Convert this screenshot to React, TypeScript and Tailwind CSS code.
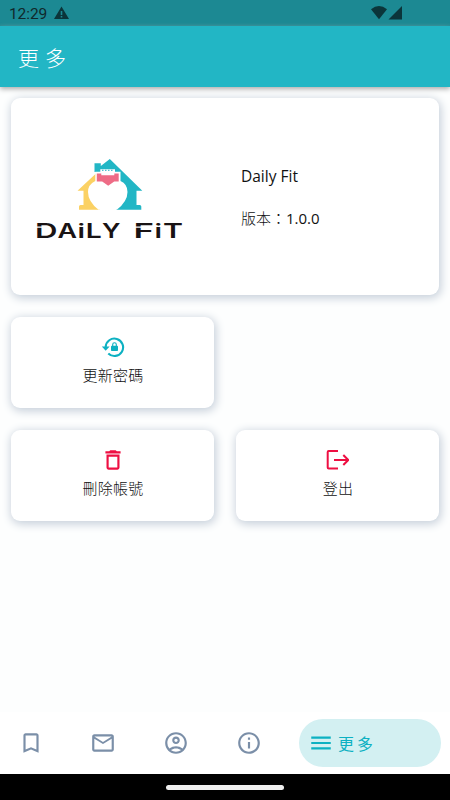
import type { ReactNode } from 'react'
import {
    MdBookmarkBorder,
    MdDeleteOutline,
    MdInfoOutline,
    MdMailOutline,
    MdMenu,
    MdOutlineAccountCircle,
} from 'react-icons/md'

interface ActionCardProps {
    icon: ReactNode
    label: string
}

function StatusBar() {
    return (
        <div className="flex h-[26px] items-center bg-[#1c8993] pl-[9px] pr-[47px] text-[#0b353a]">
            <span className="w-[39px] whitespace-nowrap pt-[2px] font-[Roboto,sans-serif] text-[15.5px] leading-[18px] tracking-[-0.1px] text-[#10282b]">12:29</span>
            <svg className="ml-[6px] h-[14px] w-[15px]" viewBox="0 0 15 14">
                <path fill="currentColor" fillRule="evenodd" d="M7.5 .5 15 13H0ZM6.700 5v4h1.600V5Zm0 5v1.600h1.600V10Z" />
            </svg>
            <svg className="ml-auto h-[14px] w-[32px]" viewBox="0 0 32 14">
                <path fill="currentColor" d="M0 3.200Q8 -3 16 3.200L8 13.300Z" />
                <path fill="currentColor" d="M31 0v13.600H17.500Z" />
            </svg>
        </div>
    )
}

function Logo() {
    return (
        <svg className="h-[96px] w-[156px] overflow-visible" viewBox="32 157 156 96" role="img" aria-label="Daily Fit">
            {/* house */}
            <path fill="#fbd163" d="M96 173.500 77.500 190.700H83.500V205H80.500Q79 205 79 206.500V209.700H100V173.500Z" />
            <path fill="#22b6c5" d="M94.500 163.300h6.300v2.800L109.800 159l32.500 31.700h-5.800V205h3.200Q141.300 205 141.300 206.500v3.200H116V172H94.500Z" />
            {/* kettlebell body */}
            <path fill="#fff" d="M95.300 171.800h5v-2.500h14.700v2.500h5.500V181Q127.500 184 127.500 192 127.500 201.500 116.800 209.800H98.500Q88 201.500 88 192 88 184.500 95.300 181Z" />
            <path fill="#ee6c86" d="M96.800 173.600h4.500v1.700h13v-1.700h4.400v7.800h-4.500l-6 4.300-6-4.300h-5.400Z" />
            <path stroke="#22b6c5" strokeWidth="1" strokeDasharray="1.500 1.500" d="M102 170.300h12" />
            {/* wordmark */}
            <g fill="#191314" className="font-[Inter,sans-serif] text-[19.5px] font-semibold">
                <text y="237.600">
                    <tspan x="35" textLength="22.500" lengthAdjust="spacingAndGlyphs">D</tspan>
                    <tspan x="57.500" textLength="19.500" lengthAdjust="spacingAndGlyphs">A</tspan>
                    <tspan x="77.500" textLength="7.500" lengthAdjust="spacingAndGlyphs">i</tspan>
                    <tspan x="85.700" textLength="16" lengthAdjust="spacingAndGlyphs">L</tspan>
                    <tspan x="102" textLength="18.500" lengthAdjust="spacingAndGlyphs">Y</tspan>
                </text>
                <text y="237.600">
                    <tspan x="133.500" textLength="20.500" lengthAdjust="spacingAndGlyphs">F</tspan>
                    <tspan x="154.500" textLength="7.500" lengthAdjust="spacingAndGlyphs">i</tspan>
                    <tspan x="163" textLength="20" lengthAdjust="spacingAndGlyphs">T</tspan>
                </text>
            </g>
            <path stroke="#fff" strokeWidth="1.300" d="M36 227.200h6M134 227.200h7" />
        </svg>
    )
}

function ResetPasswordIcon() {
    return (
        <svg className="h-[24px] w-[24px]" viewBox="0 0 24 24" fill="none">
            <path d="M4.700 12A8.700 8.700 0 1 1 7.300 18.500" stroke="#0db1c2" strokeWidth="2.100" />
            <path d="M.8 11.500h7.800L4.700 15.800Z" fill="#0db1c2" />
            <rect x="10" y="10.800" width="7" height="5.200" rx=".8" fill="#0db1c2" />
            <path d="M11.700 11V9.500a1.800 1.800 0 0 1 3.600 0V11" stroke="#0db1c2" strokeWidth="1.100" />
        </svg>
    )
}

function LogoutIcon() {
    return (
        <svg className="-ml-[2px] h-[24px] w-[24px]" viewBox="0 0 24 24" fill="none" stroke="#ee0f42" strokeWidth="2">
            <path d="M13 3H3.700a1 1 0 0 0-1 1v15.600a1 1 0 0 0 1 1H13" />
            <path d="M9 12h14.500M18.300 7l5 5-5 5" />
        </svg>
    )
}

function ActionCard({ icon, label }: ActionCardProps) {
    return (
        <button className="flex h-[91px] flex-col items-center rounded-[9px] bg-white pt-[17px] shadow-[1px_2px_10px_1px_#c5ced9]">
            <span className="flex h-[26px] items-center">{icon}</span>
            <span className="mt-[4px] pl-px text-[15px] font-light leading-[22px] tracking-[0.3px] text-[#111]">{label}</span>
        </button>
    )
}

function BottomNav() {
    return (
        <nav className="flex h-[62px] items-center bg-white pl-[17.500px] pr-[9px] pb-px text-[#7b8fa8]">
            <div className="flex flex-1 gap-[46.700px]">
                <MdBookmarkBorder size={26} />
                <MdMailOutline size={26} />
                <MdOutlineAccountCircle size={26} />
                <MdInfoOutline size={26} />
            </div>
            <div className="flex h-[48px] w-[142px] items-center rounded-full bg-[#d3f0f2] pl-[9px] text-[#0db1c2]">
                <MdMenu size={26} />
                <span className="ml-[4px] text-[16px] leading-[24px] tracking-[3px]">更多</span>
            </div>
        </nav>
    )
}

export default function App() {
    return (
        <div className="flex h-[800px] w-[450px] flex-col overflow-hidden bg-[#fdfefe] font-['Noto_Sans_CJK_TC','Noto_Sans',sans-serif]">
            <StatusBar />
            <header className="z-10 flex h-[61px] items-center bg-[#22b6c5] pl-[18px] shadow-[0_2px_5px_#aaa]">
                <h1 className="pt-px text-[21px] font-light leading-[32px] tracking-[6px] text-white">更多</h1>
            </header>
            <main className="flex flex-1 flex-col gap-[22px] px-[11px] pt-[11px]">
                <section className="flex h-[197px] rounded-[9px] bg-white shadow-[1px_2px_10px_1px_#c5ced9]">
                    <div className="w-[229px] pl-[21px] pt-[59px]">
                        <Logo />
                    </div>
                    <div className="flex flex-col gap-[18px] pt-[66px] pl-px text-[15.500px] leading-[24px] text-[#111]">
                        <p className="font-['Open_Sans','Noto_Sans',sans-serif]">Daily Fit</p>
                        <p className="font-['Open_Sans','Noto_Sans_CJK_TC',sans-serif] text-[15px]">
                            <span className="font-light">版本：</span>1.0.0
                        </p>
                    </div>
                </section>
                <div className="grid grid-cols-2 gap-[22px]">
                    <ActionCard icon={<ResetPasswordIcon />} label="更新密碼" />
                    <div />
                    <ActionCard icon={<MdDeleteOutline size={26} color="#ee0f42" />} label="刪除帳號" />
                    <ActionCard icon={<LogoutIcon />} label="登出" />
                </div>
            </main>
            <BottomNav />
            <div className="flex h-[26px] items-center justify-center bg-black">
                <div className="h-[5px] w-[118px] rounded-full bg-[#eee]" />
            </div>
        </div>
    )
}
